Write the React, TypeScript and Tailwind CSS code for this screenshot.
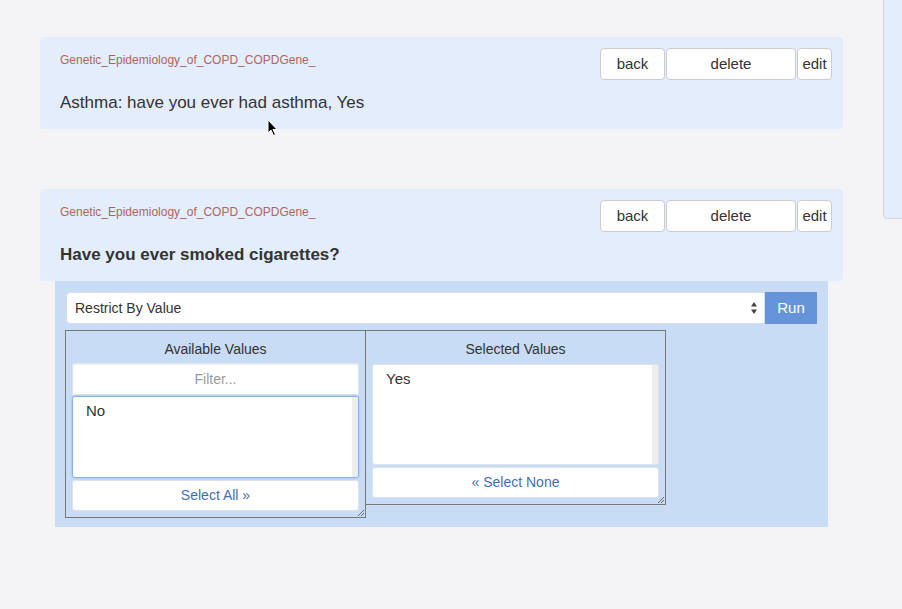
import React from 'react';

const FONT = { fontFamily: '"Liberation Sans", Arial, sans-serif' };

function ActionButtons() {
  return (
    <div className="flex gap-px">
      <button className="h-8 w-[65px] rounded border border-[#ccc] bg-white text-[15px] text-[#333]">back</button>
      <button className="h-8 w-[130px] rounded border border-[#ccc] bg-white text-[15px] text-[#333]">delete</button>
      <button className="h-8 w-[35px] rounded border border-[#ccc] bg-white text-[15px] text-[#333]">edit</button>
    </div>
  );
}

function QueryCard({ title, bold }: { title: string; bold?: boolean }) {
  return (
    <div className="flex h-[92px] w-[803px] justify-between rounded bg-[#e3edfb]">
      <div className="pl-5 pt-[15px]">
        <div className="text-[12px] leading-[16px] text-[#b0665f]">Genetic_Epidemiology_of_COPD_COPDGene_</div>
        <div className={`mt-[24px] text-[17px] leading-[22px] text-[#333] ${bold ? 'font-bold' : ''}`}>{title}</div>
      </div>
      <div className="pr-[11px] pt-[11px]">
        <ActionButtons />
      </div>
    </div>
  );
}

function Resize() {
  return (
    <svg className="absolute bottom-0 right-0" width="9" height="9" viewBox="0 0 9 9">
      <path d="M8 2 L2 8 M8 5 L5 8" stroke="#666" strokeWidth="1" />
    </svg>
  );
}

function ValueBox({
  heading,
  filter,
  item,
  listH,
  action,
  focused,
}: {
  heading: string;
  filter?: boolean;
  item: string;
  listH: string;
  action: string;
  focused?: boolean;
}) {
  return (
    <div className="relative w-[301px] border border-[#777] bg-[#c8dcf5] px-[6px] pb-[6px]">
      <div className="flex h-8 items-center justify-center pt-[4px] text-[14px] text-[#333]">{heading}</div>
      {filter && (
        <div className="flex h-8 items-center justify-center rounded-t-[3px] border border-[#e0e6ee] bg-white text-[14px] text-[#999] shadow-[inset_0_1px_2px_rgba(0,0,0,0.06)]">
          Filter...
        </div>
      )}
      <div
        className={`flex ${listH} mt-px overflow-hidden rounded-[3px] border bg-white ${
          focused ? 'border-[#86b3e8] shadow-[0_0_2px_rgba(100,150,220,0.6)]' : 'border-[#dde3ea]'
        }`}
      >
        <div className="flex-1 pl-[13px] pt-[3px] text-[15px] leading-[22px] text-[#333]">{item}</div>
        <div className="w-[6px] bg-[#eeeeee]" />
      </div>
      <button className="mt-[2px] flex h-[31px] w-full items-center justify-center rounded-[3px] border border-[#dde3ea] bg-white text-[14px] text-[#3f6fb1]">
        {action}
      </button>
      <Resize />
    </div>
  );
}

function RestrictPanel() {
  return (
    <div className="ml-[15px] h-[246px] w-[773px] bg-[#c8dcf5] pl-[10px] pr-[10px] pt-[11px]">
      <div className="flex">
        <div className="ml-px flex h-8 w-[699px] items-center justify-between rounded-l border border-[#d8dde3] bg-white pl-2 pr-[6px] text-[14px] text-[#333]">
          <span>Restrict By Value</span>
          <svg width="8" height="14" viewBox="0 0 8 14">
            <path d="M4 1 L7 5.5 H1 Z M4 13 L7 8.5 H1 Z" fill="#444" />
          </svg>
        </div>
        <button className="h-8 w-[52px] bg-[#6594d9] text-[15px] text-white">Run</button>
      </div>
      <div className="mt-[6px] flex items-start">
        <ValueBox heading="Available Values" filter item="No" listH="h-[82px]" action="Select All »" focused />
        <div className="-ml-px">
          <ValueBox heading="Selected Values" item="Yes" listH="h-[101px]" action="« Select None" />
        </div>
      </div>
    </div>
  );
}

export default function App() {
  return (
    <div className="relative flex h-[609px] w-[902px] overflow-hidden bg-[#f4f4f6]" style={FONT}>
      <div className="w-[883px] pl-10 pt-[37px]">
        <QueryCard title="Asthma: have you ever had asthma, Yes" />
        <div className="mt-[60px]">
          <QueryCard title="Have you ever smoked cigarettes?" bold />
        </div>
        <RestrictPanel />
      </div>
      <div className="h-[219px] flex-1 rounded-bl border-b border-l border-[#d3d6db] bg-[#e3edfb]" />
      <svg className="absolute left-[267px] top-[119px]" width="12" height="18" viewBox="0 0 12 18">
        <path d="M1 1 L1 14 L4 11 L6.5 16.5 L8.5 15.5 L6 10.5 L10 10.5 Z" fill="#000" stroke="#fff" strokeWidth="1" />
      </svg>
    </div>
  );
}
